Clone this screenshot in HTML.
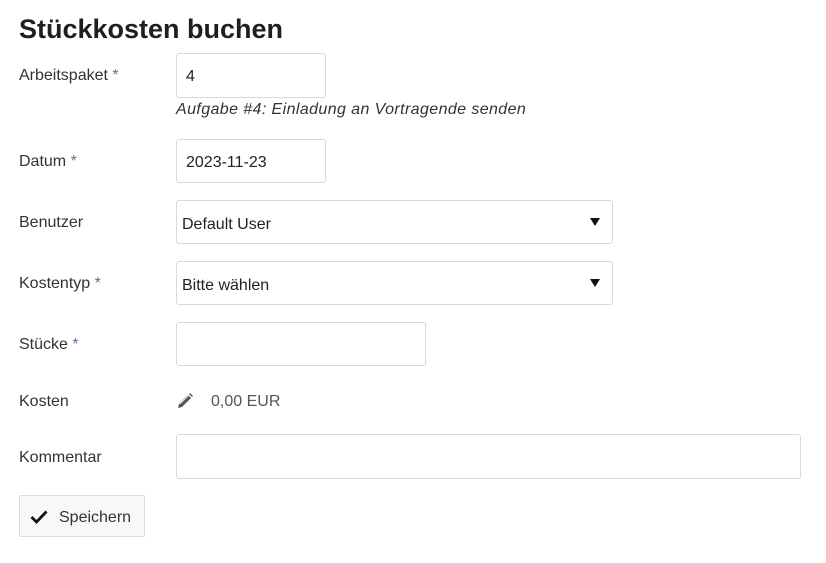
<!DOCTYPE html>
<html><head><meta charset="utf-8"><style>
body{margin:0;width:826px;height:563px;background:#fff;font-family:"Liberation Sans",sans-serif;color:#333;position:relative;overflow:hidden}
.a{position:absolute}
h1{position:absolute;left:19px;top:14px;margin:0;font-size:27px;font-weight:bold;color:#1f1f1f;letter-spacing:0}
.l{position:absolute;left:19px;font-size:16px;color:#333}
.s{color:#6a6a9a}
.i{position:absolute;left:176px;box-sizing:border-box;border:1px solid #d9d9d9;border-radius:3px;background:#fff;font-size:16px;color:#222;padding-left:9px}
.sel{padding-left:5px}
.arr{position:absolute;right:12px;top:15px;width:0;height:0;border-left:5px solid transparent;border-right:5px solid transparent;border-top:8px solid #111}
</style></head><body>
<h1>Stückkosten buchen</h1>
<div class="l" style="top:67px">Arbeitspaket <span class="s">*</span></div>
<div class="i" style="top:53px;width:150px;height:45px;line-height:45px">4</div>
<div class="a" style="left:176px;top:101px;font-size:16px;font-style:italic;color:#333;letter-spacing:0.4px">Aufgabe #4: Einladung an Vortragende senden</div>
<div class="l" style="top:153px">Datum <span class="s">*</span></div>
<div class="i" style="top:139px;width:150px;height:44px;line-height:45px">2023-11-23</div>
<div class="l" style="top:214px">Benutzer</div>
<div class="i sel" style="top:200px;width:437px;height:44px;line-height:47px">Default User<div class="arr" style="top:17px"></div></div>
<div class="l" style="top:275px">Kostentyp <span class="s">*</span></div>
<div class="i sel" style="top:261px;width:437px;height:44px;line-height:47px">Bitte wählen<div class="arr" style="top:17px"></div></div>
<div class="l" style="top:336px">Stücke <span class="s">*</span></div>
<div class="i" style="top:322px;width:250px;height:44px"></div>
<div class="l" style="top:393px">Kosten</div>
<svg class="a" style="left:176px;top:392px" width="18" height="18" viewBox="0 0 18 18"><path d="M2 16 L3 12 L12 3 L15 6 L6 15 Z" fill="#555"/><path d="M13 2 L14 1 L17 4 L16 5 Z" fill="#555"/><path d="M4 12 L13 3" stroke="#fff" stroke-width="0.8"/></svg>
<div class="a" style="left:211px;top:393px;font-size:16px;color:#555">0,00 EUR</div>
<div class="l" style="top:449px">Kommentar</div>
<div class="i" style="top:434px;width:625px;height:45px"></div>
<div class="a" style="left:19px;top:495px;width:126px;height:42px;box-sizing:border-box;border:1px solid #ddd;border-radius:2px;background:#f8f8f8;font-size:16px;line-height:43px;color:#333">
<svg class="a" style="left:10px;top:14px" width="18" height="14" viewBox="0 0 18 14"><path d="M1.5 7 L6.5 12 L16.5 1.5" stroke="#111" stroke-width="2.8" fill="none"/></svg>
<span style="position:absolute;left:39px">Speichern</span></div>
</body></html>
